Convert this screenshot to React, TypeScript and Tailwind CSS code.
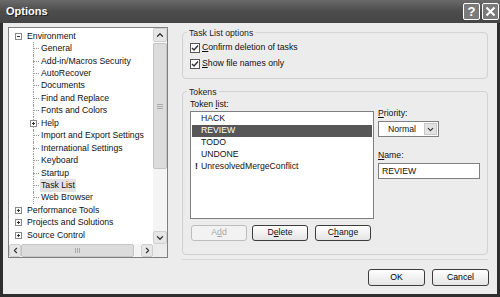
import { ChevronUp, ChevronDown, ChevronLeft, ChevronRight } from 'lucide-react';

const font = { fontFamily: '"Liberation Sans", Arial, sans-serif' };

type Node = { label: string; depth: 0 | 1; expander?: '+' | '-'; selected?: boolean };

const nodes: Node[] = [
  { label: 'Environment', depth: 0, expander: '-' },
  { label: 'General', depth: 1 },
  { label: 'Add-in/Macros Security', depth: 1 },
  { label: 'AutoRecover', depth: 1 },
  { label: 'Documents', depth: 1 },
  { label: 'Find and Replace', depth: 1 },
  { label: 'Fonts and Colors', depth: 1 },
  { label: 'Help', depth: 1, expander: '+' },
  { label: 'Import and Export Settings', depth: 1 },
  { label: 'International Settings', depth: 1 },
  { label: 'Keyboard', depth: 1 },
  { label: 'Startup', depth: 1 },
  { label: 'Task List', depth: 1, selected: true },
  { label: 'Web Browser', depth: 1 },
  { label: 'Performance Tools', depth: 0, expander: '+' },
  { label: 'Projects and Solutions', depth: 0, expander: '+' },
  { label: 'Source Control', depth: 0, expander: '+' },
];

const Expander = ({ sign }: { sign: '+' | '-' }) => (
  <div className="relative w-[7px] h-[7px] border border-[#8a8a8a] bg-white">
    <div className="absolute left-[1px] top-[2px] w-[3px] h-px bg-[#333]" />
    {sign === '+' && <div className="absolute left-[2px] top-[1px] w-px h-[3px] bg-[#333]" />}
  </div>
);

const TreeRow = ({ node }: { node: Node }) => (
  <div className="relative flex items-center h-[12.45px] text-[8.7px] text-[#111] whitespace-nowrap">
    {node.depth === 0 ? (
      <div className="w-[18px] flex justify-start pl-[6px]">{node.expander && <Expander sign={node.expander} />}</div>
    ) : (
      <>
        <div className="absolute left-[24px] top-0 bottom-0 border-l border-dotted border-[#999]" />
        <div className="w-[18px]" />
        <div className="relative w-[14px] flex items-center">
          <div className="absolute left-[6px] w-[6px] border-t border-dotted border-[#999]" />
          {node.expander && (
            <div className="relative left-[3px]">
              <Expander sign={node.expander} />
            </div>
          )}
        </div>
      </>
    )}
    <span className={node.selected ? 'bg-[#e2e2e2] px-[1px] -ml-[1px]' : ''}>{node.label}</span>
  </div>
);

const Btn = ({ children, disabled }: { children: React.ReactNode; disabled?: boolean }) => (
  <div
    className={`w-[56px] h-[16px] rounded-[3px] border flex items-center justify-center text-[8.7px] ${
      disabled ? 'border-[#bdbdbd] text-[#a8a8a8] bg-[#f2f2f2]' : 'border-[#3c3c3c] text-[#111] bg-gradient-to-b from-white to-[#e4e4e4]'
    }`}
  >
    {children}
  </div>
);

const Check = () => (
  <div className="w-[10px] h-[10px] border border-[#555] bg-white flex items-center justify-center">
    <svg width="8" height="8" viewBox="0 0 8 8">
      <path d="M1 4 L3 6 L7 1.5" fill="none" stroke="#333" strokeWidth="1.4" />
    </svg>
  </div>
);

export default function App() {
  return (
    <div className="w-[500px] h-[297px] flex flex-col bg-[#2e2e2e] overflow-hidden" style={font}>
      {/* title bar */}
      <div className="h-[23px] flex items-center justify-between px-[6px] bg-gradient-to-b from-[#6a6a6a] via-[#4c4c4c] to-[#454545]">
        <span className="text-white font-bold text-[11px] [text-shadow:1px_1px_0_#222]">Options</span>
        <div className="flex gap-[2px] -mr-[5px]">
          <div className="w-[17px] h-[17px] rounded-[2px] border border-white bg-[#7a7a7a] flex items-center justify-center text-white font-bold text-[13px]">
            ?
          </div>
          <div className="w-[17px] h-[17px] rounded-[2px] border border-white bg-[#7a7a7a] flex items-center justify-center">
            <svg width="11" height="11" viewBox="0 0 11 11">
              <path d="M1.5 1.5 L9.5 9.5 M9.5 1.5 L1.5 9.5" stroke="white" strokeWidth="2" />
            </svg>
          </div>
        </div>
      </div>

      {/* body */}
      <div className="flex-1 mx-[3px] mb-[3px] bg-[#ececec] flex flex-col">
        <div className="flex pt-[4px]">
          {/* tree panel */}
          <div className="ml-[5px] w-[160px] h-[231px] border border-[#7f7f7f] bg-white flex flex-col">
            <div className="flex flex-1 min-h-0">
              <div className="flex-1 pt-[2px] overflow-hidden">
                {nodes.map((n) => (
                  <TreeRow key={n.label} node={n} />
                ))}
              </div>
              <div className="w-[14px] flex flex-col bg-[#f4f4f4]">
                <div className="h-[14px] bg-[#e6e6e6] border border-[#cfcfcf] rounded-[2px] flex items-center justify-center">
                  <ChevronUp size={10} strokeWidth={3} className="text-[#333]" />
                </div>
                <div className="h-[126px] mt-px bg-[#dcdcdc] border border-[#c4c4c4] rounded-[2px] flex items-center justify-center">
                  <div className="flex flex-col gap-[1px]">
                    <div className="w-[6px] h-px bg-[#aaa]" />
                    <div className="w-[6px] h-px bg-[#aaa]" />
                    <div className="w-[6px] h-px bg-[#aaa]" />
                  </div>
                </div>
                <div className="flex-1" />
                <div className="h-[13px] bg-[#e6e6e6] border border-[#cfcfcf] rounded-[2px] flex items-center justify-center">
                  <ChevronDown size={10} strokeWidth={3} className="text-[#333]" />
                </div>
              </div>
            </div>
            <div className="h-[13px] flex">
              <div className="w-[12px] bg-[#e6e6e6] border border-[#cfcfcf] rounded-[2px] flex items-center justify-center">
                <ChevronLeft size={9} strokeWidth={3} className="text-[#333]" />
              </div>
              <div className="w-[113px] bg-[#dcdcdc] border border-[#c4c4c4] rounded-[2px] flex items-center justify-center">
                <div className="flex gap-[1px]">
                  <div className="w-px h-[5px] bg-[#aaa]" />
                  <div className="w-px h-[5px] bg-[#aaa]" />
                  <div className="w-px h-[5px] bg-[#aaa]" />
                </div>
              </div>
              <div className="flex-1 bg-[#f4f4f4]" />
              <div className="w-[12px] bg-[#e6e6e6] border border-[#cfcfcf] rounded-[2px] flex items-center justify-center">
                <ChevronRight size={9} strokeWidth={3} className="text-[#333]" />
              </div>
              <div className="w-[14px] bg-[#ececec]" />
            </div>
          </div>

          {/* right side */}
          <div className="ml-[14px] w-[306px] flex flex-col text-[8.7px] text-[#111]">
            <div className="relative mt-[5px] h-[47px] border border-[#d2d2d2] rounded-[4px] pt-[8px] pl-[7px]">
              <span className="absolute -top-[6px] left-[4px] bg-[#ececec] px-[2px] text-[#222]">Task List options</span>
              <div className="flex flex-col gap-[3px]">
                <div className="flex items-center gap-[2px]">
                  <Check />
                  <span>
                    <u>C</u>onfirm deletion of tasks
                  </span>
                </div>
                <div className="flex items-center gap-[2px]">
                  <Check />
                  <span>
                    <u>S</u>how file names only
                  </span>
                </div>
              </div>
            </div>

            <div className="relative mt-[12px] h-[164px] border border-[#d2d2d2] rounded-[4px] pt-[7px] pl-[7px]">
              <span className="absolute -top-[6px] left-[4px] bg-[#ececec] px-[2px] text-[#222]">Tokens</span>
              <div className="flex">
                <div className="flex flex-col">
                  <span className="leading-[11px]">
                    Token <u>l</u>ist:
                  </span>
                  <div className="w-[184px] h-[108px] border border-[#7f7f7f] bg-white pt-[1px] px-[1px] mt-px">
                    {['HACK', 'REVIEW', 'TODO', 'UNDONE', 'UnresolvedMergeConflict'].map((t) => (
                      <div
                        key={t}
                        className={`h-[12px] flex items-center ${t === 'REVIEW' ? 'bg-[#575757] text-white' : ''}`}
                      >
                        <span className="w-[9px] text-center font-bold">{t === 'UnresolvedMergeConflict' ? '!' : ''}</span>
                        {t}
                      </div>
                    ))}
                  </div>
                  <div className="flex gap-[5px] mt-[6px] ml-[1px]">
                    <Btn disabled>
                      A<u>d</u>d
                    </Btn>
                    <Btn>
                      D<u>e</u>lete
                    </Btn>
                    <div className="ml-[2px]">
                      <Btn>
                        C<u>h</u>ange
                      </Btn>
                    </div>
                  </div>
                </div>
                <div className="ml-[4px] flex flex-col pt-[8px]">
                  <span>
                    <u>P</u>riority:
                  </span>
                  <div className="mt-[1px] w-[61px] h-[16px] border border-[#7f7f7f] bg-white flex items-center">
                    <span className="flex-1 pl-[9px]">Normal</span>
                    <div className="w-[13px] h-[12px] mr-[1px] bg-[#e2e2e2] border border-[#c8c8c8] flex items-center justify-center">
                      <ChevronDown size={9} strokeWidth={3} className="text-[#333]" />
                    </div>
                  </div>
                  <span className="mt-[12px]">
                    <u>N</u>ame:
                  </span>
                  <div className="mt-[1px] w-[102px] h-[16px] border border-[#7f7f7f] bg-white flex items-center pl-[3px]">
                    REVIEW
                  </div>
                </div>
              </div>
            </div>
            <div className="mt-[4px] h-px bg-[#d8d8d8]" />
          </div>
        </div>

        {/* footer buttons */}
        <div className="flex justify-end gap-[7px] pr-[8px] mt-[9px] text-[8.7px]">
          <div className="w-[57px] h-[17px] rounded-[3px] border border-[#3c3c3c] bg-gradient-to-b from-white to-[#e4e4e4] flex items-center justify-center">
            OK
          </div>
          <div className="w-[57px] h-[17px] rounded-[3px] border border-[#3c3c3c] bg-gradient-to-b from-white to-[#e4e4e4] flex items-center justify-center">
            Cancel
          </div>
        </div>
      </div>
    </div>
  );
}
